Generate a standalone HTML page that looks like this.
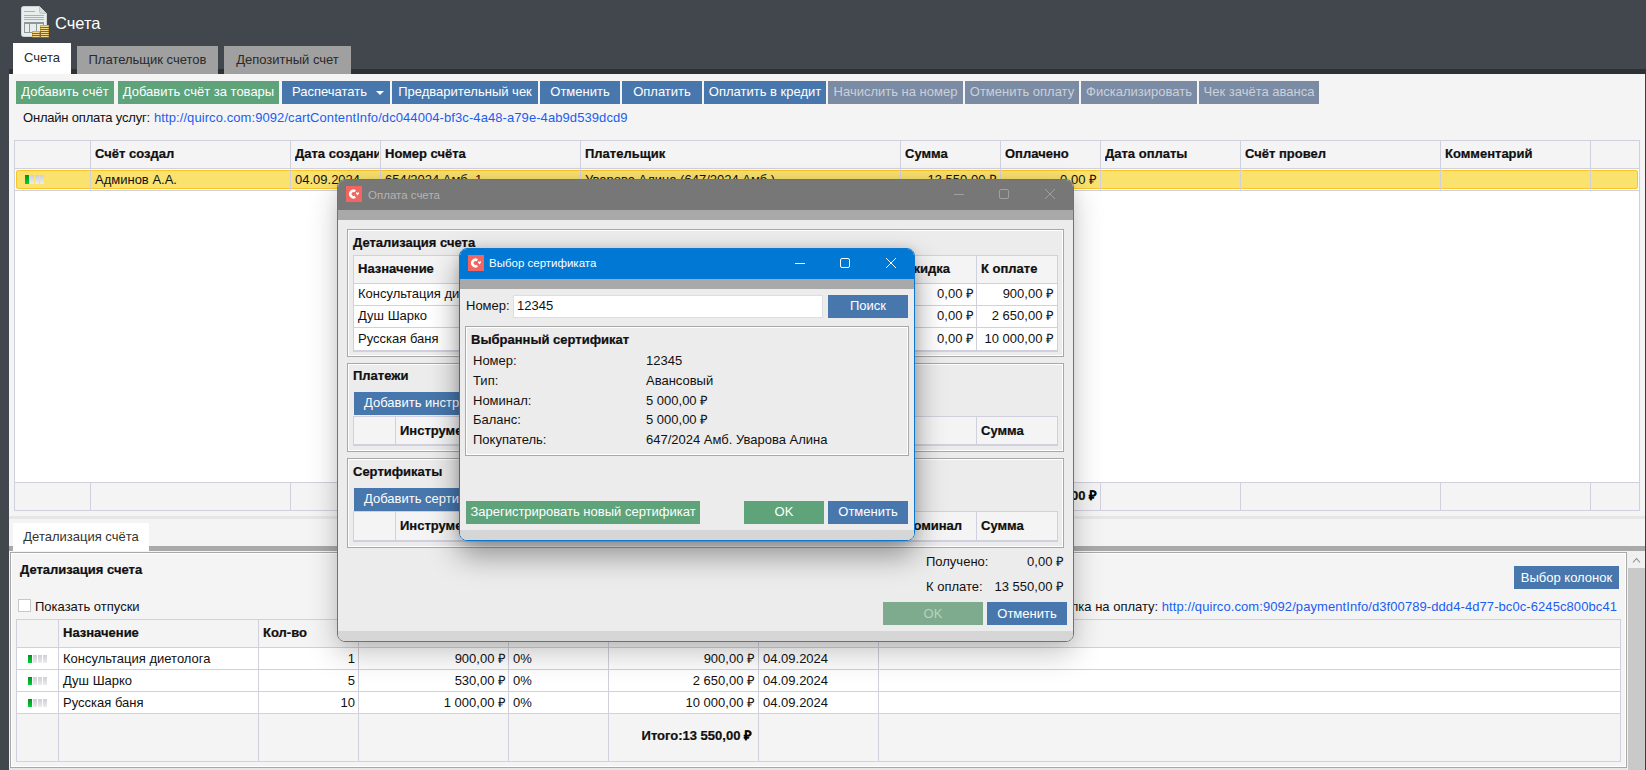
<!DOCTYPE html>
<html><head><meta charset="utf-8">
<style>
*{box-sizing:border-box;margin:0;padding:0}
html,body{width:1646px;height:770px;overflow:hidden}
body{background:#42474e;font-family:"Liberation Sans",sans-serif;font-size:13px;color:#111;position:relative}
.a{position:absolute}
.t{position:absolute;white-space:nowrap;line-height:16px}
.b{font-weight:bold;-webkit-text-stroke:0.2px #000}
.btn{position:absolute;height:23px;line-height:21px;color:#fff;text-align:center;white-space:nowrap;font-size:13px}
.g{background:#5ea37a}
.bl{background:#4877ad}
.dis{background:#7a8ba3;color:#c9d1dc}
.lnk{color:#1b5ef0;letter-spacing:0.08px}
.tab{position:absolute;text-align:center;line-height:28px;color:#2a2a2a}
.vl{position:absolute;width:1px;background:#d0d0de}
.hl{position:absolute;height:1px;background:#d0d0de}
.r{text-align:right}
.pb{position:absolute;width:4px;height:9px}
.pg{background:linear-gradient(#0b8a22,#00d034)}
.pgr{background:linear-gradient(#cfcfd4,#ececee)}
</style></head><body>

<!-- title -->
<svg class="a" style="left:21px;top:6px" width="29" height="33" viewBox="0 0 29 33">
  <path d="M0.5 2.5 Q0.5 0.5 2.5 0.5 L18.5 0.5 L25.5 7.5 L25.5 28.5 Q25.5 30.5 23.5 30.5 L2.5 30.5 Q0.5 30.5 0.5 28.5 Z" fill="#e8eded" stroke="#cdd3d3" stroke-width="1"/>
  <path d="M18.5 0.5 L18.5 5.5 Q18.5 7.5 20.5 7.5 L25.5 7.5" fill="#d3dada" stroke="#bcc5c5"/>
  <g fill="#a9b1b1"><rect x="3" y="5" width="11" height="1"/><rect x="3" y="9" width="20" height="1"/><rect x="3" y="11" width="20" height="1"/><rect x="3" y="13" width="20" height="1"/></g>
  <rect x="3.5" y="16.5" width="19" height="10" fill="none" stroke="#8f9898" stroke-width="1"/>
  <path d="M3.5 17.5h19M8.5 16.5v10M15.5 16.5v10" stroke="#8f9898" stroke-width="1"/>
  <g fill="#d4aa50"><rect x="19" y="19" width="9" height="13"/><rect x="11" y="25" width="8" height="7"/></g>
  <g fill="#8a6420"><rect x="19" y="21" width="9" height="1"/><rect x="19" y="23" width="9" height="1"/><rect x="19" y="25" width="9" height="1"/><rect x="19" y="27" width="9" height="1"/><rect x="19" y="29" width="9" height="1"/><rect x="19" y="31" width="9" height="1"/><rect x="11" y="27" width="8" height="1"/><rect x="11" y="29" width="8" height="1"/><rect x="11" y="31" width="8" height="1"/><rect x="19" y="25" width="1" height="7"/></g>
  <g fill="#f0d890"><rect x="20" y="20" width="7" height="1"/><rect x="20" y="22" width="7" height="1"/><rect x="20" y="24" width="7" height="1"/><rect x="20" y="26" width="7" height="1"/><rect x="20" y="28" width="7" height="1"/><rect x="20" y="30" width="7" height="1"/><rect x="12" y="26" width="6" height="1"/><rect x="12" y="28" width="6" height="1"/><rect x="12" y="30" width="6" height="1"/></g>
</svg>
<div class="t" style="left:55px;top:13px;font-size:16.5px;line-height:20px;color:#fff">Счета</div>

<!-- dark band + tabs -->
<div class="a" style="left:9px;top:69px;width:1637px;height:5px;background:#2d3134"></div>
<div class="tab" style="left:13px;top:43px;width:58px;height:31px;background:#fff;line-height:29px">Счета</div>
<div class="tab" style="left:77px;top:46px;width:141px;height:28px;background:#a0a0a0">Плательщик счетов</div>
<div class="tab" style="left:224px;top:46px;width:127px;height:28px;background:#a0a0a0">Депозитный счет</div>

<!-- content panel -->
<div class="a" style="left:9px;top:74px;width:1636px;height:696px;background:#f4f4f4"></div>
<div class="a" style="left:1645px;top:74px;width:1px;height:696px;background:#3a3e44"></div>

<!-- toolbar -->
<div class="btn g" style="left:16px;top:81px;width:98px">Добавить счёт</div>
<div class="btn g" style="left:118px;top:81px;width:161px">Добавить счёт за товары</div>
<div class="btn bl" style="left:282px;top:81px;width:108px;text-align:left;padding-left:10px">Распечатать<svg class="a" style="left:94px;top:10px" width="8" height="4"><path d="M0 0h8L4 4z" fill="#fff"/></svg></div>
<div class="btn bl" style="left:392px;top:81px;width:146px">Предварительный чек</div>
<div class="btn bl" style="left:540px;top:81px;width:80px">Отменить</div>
<div class="btn bl" style="left:622px;top:81px;width:80px">Оплатить</div>
<div class="btn bl" style="left:704px;top:81px;width:122px">Оплатить в кредит</div>
<div class="btn dis" style="left:828px;top:81px;width:135px">Начислить на номер</div>
<div class="btn dis" style="left:965px;top:81px;width:114px">Отменить оплату</div>
<div class="btn dis" style="left:1081px;top:81px;width:116px">Фискализировать</div>
<div class="btn dis" style="left:1199px;top:81px;width:120px">Чек зачёта аванса</div>

<div class="t" style="left:23px;top:110px;letter-spacing:-0.2px">Онлайн оплата услуг:</div><div class="t lnk" style="left:154px;top:110px">http://quirco.com:9092/cartContentInfo/dc044004-bf3c-4a48-a79e-4ab9d539dcd9</div>

<!-- MAINTABLE -->
<div class="a" style="left:14px;top:140px;width:1626px;height:28px;background:#f4f4f4"></div>
<div class="a" style="left:14px;top:168px;width:1626px;height:314px;background:#fff"></div>
<div class="a" style="left:14px;top:482px;width:1626px;height:28px;background:#f4f4f4"></div>
<div class="a" style="left:16px;top:170px;width:1622px;height:19px;background:#f9e26e;border:1px solid #fcc427;border-radius:2px"></div>
<div class="hl" style="left:14px;top:140px;width:1626px"></div>
<div class="hl" style="left:14px;top:168px;width:1626px"></div>
<div class="hl" style="left:14px;top:190px;width:1626px"></div>
<div class="hl" style="left:14px;top:482px;width:1626px"></div>
<div class="hl" style="left:14px;top:510px;width:1626px"></div>
<div class="vl" style="left:14px;top:140px;height:371px"></div>
<div class="vl" style="left:90px;top:140px;height:51px"></div>
<div class="vl" style="left:90px;top:482px;height:29px"></div>
<div class="vl" style="left:290px;top:140px;height:51px"></div>
<div class="vl" style="left:290px;top:482px;height:29px"></div>
<div class="vl" style="left:380px;top:140px;height:51px"></div>
<div class="vl" style="left:380px;top:482px;height:29px"></div>
<div class="vl" style="left:580px;top:140px;height:51px"></div>
<div class="vl" style="left:580px;top:482px;height:29px"></div>
<div class="vl" style="left:900px;top:140px;height:51px"></div>
<div class="vl" style="left:900px;top:482px;height:29px"></div>
<div class="vl" style="left:1000px;top:140px;height:51px"></div>
<div class="vl" style="left:1000px;top:482px;height:29px"></div>
<div class="vl" style="left:1100px;top:140px;height:51px"></div>
<div class="vl" style="left:1100px;top:482px;height:29px"></div>
<div class="vl" style="left:1240px;top:140px;height:51px"></div>
<div class="vl" style="left:1240px;top:482px;height:29px"></div>
<div class="vl" style="left:1440px;top:140px;height:51px"></div>
<div class="vl" style="left:1440px;top:482px;height:29px"></div>
<div class="vl" style="left:1590px;top:140px;height:51px"></div>
<div class="vl" style="left:1590px;top:482px;height:29px"></div>
<div class="vl" style="left:1639px;top:140px;height:371px"></div>
<div class="t b" style="left:95px;top:146px;width:194px;overflow:hidden">Счёт создал</div>
<div class="t b" style="left:295px;top:146px;width:84px;overflow:hidden">Дата создания</div>
<div class="t b" style="left:385px;top:146px;width:194px;overflow:hidden">Номер счёта</div>
<div class="t b" style="left:585px;top:146px;width:314px;overflow:hidden">Плательщик</div>
<div class="t b" style="left:905px;top:146px;width:94px;overflow:hidden">Сумма</div>
<div class="t b" style="left:1005px;top:146px;width:94px;overflow:hidden">Оплачено</div>
<div class="t b" style="left:1105px;top:146px;width:134px;overflow:hidden">Дата оплаты</div>
<div class="t b" style="left:1245px;top:146px;width:194px;overflow:hidden">Счёт провел</div>
<div class="t b" style="left:1445px;top:146px;width:144px;overflow:hidden">Комментарий</div>
<div class="pb pg" style="left:25px;top:175px"></div>
<div class="pb pgr" style="left:30px;top:175px"></div>
<div class="pb pgr" style="left:35px;top:175px"></div>
<div class="pb pgr" style="left:40px;top:175px"></div>
<div class="t" style="left:95px;top:172px">Админов А.А.</div>
<div class="t" style="left:295px;top:172px">04.09.2024</div>
<div class="t" style="left:385px;top:172px">654/2024 Амб. 1</div>
<div class="t" style="left:585px;top:172px">Уварова Алина (647/2024 Амб.)</div>
<div class="t r" style="left:900px;top:172px;width:97px">13 550,00 ₽</div>
<div class="t r" style="left:1000px;top:172px;width:97px">0,00 ₽</div>
<div class="t b r" style="left:900px;top:488px;width:97px">13 550,00 ₽</div>
<div class="t b r" style="left:1000px;top:488px;width:97px">0,00 ₽</div>
<!-- /MAINTABLE -->

<!-- BOTTOM -->
<div class="a" style="left:9px;top:516px;width:1636px;height:3px;background:#e6e6e6"></div>
<div class="a" style="left:9px;top:546px;width:1636px;height:5px;background:#a9a9a9"></div>
<div class="tab" style="left:13px;top:523px;width:136px;height:28px;background:#fff;line-height:28px;color:#333">Детализация счёта</div>
<div class="a" style="left:9px;top:768px;width:1618px;height:2px;background:#e6e6e6"></div>
<div class="a" style="left:10px;top:552px;width:1617px;height:216px;background:#f4f4f4;border:1px solid #a8a8a8;box-shadow:inset 1px 1px 0 #fff,inset -1px -1px 0 #fff"></div>
<div class="a" style="left:1627px;top:551px;width:18px;height:219px;background:#f0f0f0"></div>
<div class="a" style="left:1628px;top:568px;width:17px;height:202px;background:#c9c9c9"></div>
<svg class="a" style="left:1632px;top:556px" width="10" height="8"><path d="M1 6.5L4.5 2.5L8 6.5" fill="none" stroke="#8a8a8a" stroke-width="1.1"/></svg>
<div class="t b" style="left:20px;top:562px">Детализация счета</div>
<div class="btn bl" style="left:1514px;top:566px;width:105px;line-height:23px">Выбор колонок</div>
<div class="a" style="left:18px;top:599px;width:13px;height:13px;background:#fff;border:1px solid #c8c8c8"></div>
<div class="t" style="left:35px;top:599px">Показать отпуски</div>
<div class="t r" style="left:1000px;top:599px;width:617px">Ссылка на оплату: <span class="lnk">http://quirco.com:9092/paymentInfo/d3f00789-ddd4-4d77-bc0c-6245c800bc41</span></div>
<div class="a" style="left:16px;top:619px;width:1605px;height:28px;background:#f4f4f4"></div>
<div class="a" style="left:16px;top:647px;width:1605px;height:66px;background:#fff"></div>
<div class="a" style="left:16px;top:713px;width:1605px;height:48px;background:#f4f4f4"></div>
<div class="hl" style="left:16px;top:619px;width:1605px"></div>
<div class="hl" style="left:16px;top:647px;width:1605px"></div>
<div class="hl" style="left:16px;top:669px;width:1605px"></div>
<div class="hl" style="left:16px;top:691px;width:1605px"></div>
<div class="hl" style="left:16px;top:713px;width:1605px"></div>
<div class="hl" style="left:16px;top:761px;width:1605px"></div>
<div class="vl" style="left:16px;top:619px;height:143px"></div>
<div class="vl" style="left:58px;top:619px;height:143px"></div>
<div class="vl" style="left:258px;top:619px;height:143px"></div>
<div class="vl" style="left:358px;top:619px;height:143px"></div>
<div class="vl" style="left:508px;top:619px;height:143px"></div>
<div class="vl" style="left:608px;top:619px;height:143px"></div>
<div class="vl" style="left:758px;top:619px;height:143px"></div>
<div class="vl" style="left:878px;top:619px;height:143px"></div>
<div class="vl" style="left:1620px;top:619px;height:143px"></div>
<div class="t b" style="left:63px;top:625px">Назначение</div>
<div class="t b" style="left:263px;top:625px">Кол-во</div>
<div class="t b" style="left:363px;top:625px">Цена</div>
<div class="t b" style="left:513px;top:625px">Скидка</div>
<div class="t b" style="left:613px;top:625px">Сумма</div>
<div class="t b" style="left:763px;top:625px">Дата</div>
<div class="pb pg" style="left:28px;top:655px;height:8px"></div>
<div class="pb pgr" style="left:33px;top:655px;height:8px"></div>
<div class="pb pgr" style="left:38px;top:655px;height:8px"></div>
<div class="pb pgr" style="left:43px;top:655px;height:8px"></div>
<div class="t" style="left:63px;top:651px">Консультация диетолога</div>
<div class="t r" style="left:258px;top:651px;width:97px">1</div>
<div class="t r" style="left:358px;top:651px;width:148px">900,00 ₽</div>
<div class="t" style="left:513px;top:651px">0%</div>
<div class="t r" style="left:608px;top:651px;width:147px">900,00 ₽</div>
<div class="t" style="left:763px;top:651px">04.09.2024</div>
<div class="pb pg" style="left:28px;top:677px;height:8px"></div>
<div class="pb pgr" style="left:33px;top:677px;height:8px"></div>
<div class="pb pgr" style="left:38px;top:677px;height:8px"></div>
<div class="pb pgr" style="left:43px;top:677px;height:8px"></div>
<div class="t" style="left:63px;top:673px">Душ Шарко</div>
<div class="t r" style="left:258px;top:673px;width:97px">5</div>
<div class="t r" style="left:358px;top:673px;width:148px">530,00 ₽</div>
<div class="t" style="left:513px;top:673px">0%</div>
<div class="t r" style="left:608px;top:673px;width:147px">2 650,00 ₽</div>
<div class="t" style="left:763px;top:673px">04.09.2024</div>
<div class="pb pg" style="left:28px;top:699px;height:8px"></div>
<div class="pb pgr" style="left:33px;top:699px;height:8px"></div>
<div class="pb pgr" style="left:38px;top:699px;height:8px"></div>
<div class="pb pgr" style="left:43px;top:699px;height:8px"></div>
<div class="t" style="left:63px;top:695px">Русская баня</div>
<div class="t r" style="left:258px;top:695px;width:97px">10</div>
<div class="t r" style="left:358px;top:695px;width:148px">1 000,00 ₽</div>
<div class="t" style="left:513px;top:695px">0%</div>
<div class="t r" style="left:608px;top:695px;width:147px">10 000,00 ₽</div>
<div class="t" style="left:763px;top:695px">04.09.2024</div>
<div class="t b r" style="left:608px;top:728px;width:144px">Итого:13 550,00 ₽</div>
<!-- /BOTTOM -->

<!-- MODAL1 -->
<div class="a" style="left:337px;top:179px;width:737px;height:463px;border-radius:8px;box-shadow:0 12px 30px rgba(0,0,0,0.22),0 0 14px rgba(0,0,0,0.06);"></div>
<div class="a" style="left:337px;top:179px;width:737px;height:463px;border-radius:8px;overflow:hidden;background:#ececec;border:1px solid #727272"><div class="a" style="left:1px;top:1px;width:736px;height:462px">
<div class="a" style="left:-1px;top:-2px;width:736px;height:31px;background:#777777"></div>
<div class="a" style="left:-1px;top:29px;width:736px;height:10px;background:#a9a9a9"></div>
<div class="a" style="left:-1px;top:450px;width:736px;height:11px;background:#d6d6d6"></div>
<svg class="a" style="left:7px;top:5px" width="16" height="16" viewBox="0 0 16 16"><rect width="16" height="16" fill="#f26560"/><path d="M9.3 5.2A3.3 3.3 0 1 0 9.3 10.8" fill="none" stroke="#fff" stroke-width="2.5"/><path d="M10 6.6Q10.7 6 11.5 6.9Q12.3 6 13 6.6L13 7.6L11.5 9.6L10 7.6Z" fill="#fff"/></svg>
<div class="t" style="left:29px;top:6px;color:#b4b4b4;font-size:11.5px">Оплата счета</div>
<div class="a" style="left:615px;top:13px;width:10px;height:1px;background:#a0a0a0"></div>
<div class="a" style="left:660px;top:8px;width:10px;height:10px;border:1px solid #a0a0a0;border-radius:2px"></div>
<svg class="a" style="left:706px;top:8px" width="10" height="10"><path d="M0 0L10 10M10 0L0 10" stroke="#a0a0a0" stroke-width="1"/></svg>
<div class="a" style="left:8px;top:48px;width:717px;height:128px;border:1px solid #a8a8a8;box-shadow:inset 1px 1px 0 #fff,inset -1px -1px 0 #fff"></div>
<div class="t b" style="left:14px;top:54px;">Детализация счета</div>
<div class="a" style="left:8px;top:182px;width:717px;height:89px;border:1px solid #a8a8a8;box-shadow:inset 1px 1px 0 #fff,inset -1px -1px 0 #fff"></div>
<div class="t b" style="left:14px;top:187px;">Платежи</div>
<div class="a" style="left:8px;top:277px;width:717px;height:90px;border:1px solid #a8a8a8;box-shadow:inset 1px 1px 0 #fff,inset -1px -1px 0 #fff"></div>
<div class="t b" style="left:14px;top:283px;">Сертификаты</div>
<div class="a" style="left:14px;top:74px;width:705px;height:28px;background:#f4f4f4"></div>
<div class="a" style="left:14px;top:102px;width:705px;height:67px;background:#fff"></div>
<div class="a" style="left:14px;top:74px;width:705px;height:1px;background:#d0d0de"></div>
<div class="a" style="left:14px;top:102px;width:705px;height:1px;background:#d0d0de"></div>
<div class="a" style="left:14px;top:124px;width:705px;height:1px;background:#d0d0de"></div>
<div class="a" style="left:14px;top:146px;width:705px;height:1px;background:#d0d0de"></div>
<div class="a" style="left:14px;top:169px;width:705px;height:1px;background:#d0d0de"></div>
<div class="a" style="left:14px;top:74px;width:1px;height:96px;background:#d0d0de"></div>
<div class="a" style="left:560px;top:74px;width:1px;height:96px;background:#d0d0de"></div>
<div class="a" style="left:637px;top:74px;width:1px;height:96px;background:#d0d0de"></div>
<div class="a" style="left:718px;top:74px;width:1px;height:96px;background:#d0d0de"></div>
<div class="a" style="left:14px;top:169px;width:705px;height:2px;background:#d0d0de"></div>
<div class="t b" style="left:19px;top:80px;">Назначение</div>
<div class="t b" style="left:565px;top:80px;">Скидка</div>
<div class="t b" style="left:642px;top:80px;">К оплате</div>
<div class="t" style="left:19px;top:105px;">Консультация диетолога</div>
<div class="t r" style="left:560px;top:105px;width:75px">0,00 ₽</div>
<div class="t r" style="left:637px;top:105px;width:78px">900,00 ₽</div>
<div class="t" style="left:19px;top:127px;">Душ Шарко</div>
<div class="t r" style="left:560px;top:127px;width:75px">0,00 ₽</div>
<div class="t r" style="left:637px;top:127px;width:78px">2 650,00 ₽</div>
<div class="t" style="left:19px;top:150px;">Русская баня</div>
<div class="t r" style="left:560px;top:150px;width:75px">0,00 ₽</div>
<div class="t r" style="left:637px;top:150px;width:78px">10 000,00 ₽</div>
<div class="a" style="left:15px;top:211px;width:160px;height:23px;background:#4877ad"></div>
<div class="t" style="left:25px;top:214px;color:#fff">Добавить инструмент</div>
<div class="a" style="left:14px;top:235px;width:705px;height:28px;background:#f4f4f4"></div>
<div class="a" style="left:14px;top:263px;width:705px;height:0px;background:#fff"></div>
<div class="a" style="left:14px;top:235px;width:705px;height:1px;background:#d0d0de"></div>
<div class="a" style="left:14px;top:263px;width:705px;height:1px;background:#d0d0de"></div>
<div class="a" style="left:14px;top:235px;width:1px;height:29px;background:#d0d0de"></div>
<div class="a" style="left:56px;top:235px;width:1px;height:29px;background:#d0d0de"></div>
<div class="a" style="left:637px;top:235px;width:1px;height:29px;background:#d0d0de"></div>
<div class="a" style="left:718px;top:235px;width:1px;height:29px;background:#d0d0de"></div>
<div class="a" style="left:14px;top:263px;width:705px;height:2px;background:#d0d0de"></div>
<div class="a" style="left:15px;top:236px;width:703px;height:27px;background:#f4f4f4"></div>
<div class="a" style="left:56px;top:235px;width:1px;height:29px;background:#d0d0de"></div>
<div class="a" style="left:637px;top:235px;width:1px;height:29px;background:#d0d0de"></div>
<div class="t b" style="left:61px;top:242px;">Инструмент</div>
<div class="t b" style="left:642px;top:242px;">Сумма</div>
<div class="a" style="left:15px;top:307px;width:160px;height:23px;background:#4877ad"></div>
<div class="t" style="left:25px;top:310px;color:#fff">Добавить сертификат</div>
<div class="a" style="left:14px;top:330px;width:705px;height:29px;background:#f4f4f4"></div>
<div class="a" style="left:14px;top:359px;width:705px;height:0px;background:#fff"></div>
<div class="a" style="left:14px;top:330px;width:705px;height:1px;background:#d0d0de"></div>
<div class="a" style="left:14px;top:359px;width:705px;height:1px;background:#d0d0de"></div>
<div class="a" style="left:14px;top:330px;width:1px;height:30px;background:#d0d0de"></div>
<div class="a" style="left:56px;top:330px;width:1px;height:30px;background:#d0d0de"></div>
<div class="a" style="left:560px;top:330px;width:1px;height:30px;background:#d0d0de"></div>
<div class="a" style="left:637px;top:330px;width:1px;height:30px;background:#d0d0de"></div>
<div class="a" style="left:718px;top:330px;width:1px;height:30px;background:#d0d0de"></div>
<div class="a" style="left:14px;top:359px;width:705px;height:2px;background:#d0d0de"></div>
<div class="a" style="left:15px;top:331px;width:703px;height:28px;background:#f4f4f4"></div>
<div class="a" style="left:56px;top:330px;width:1px;height:30px;background:#d0d0de"></div>
<div class="a" style="left:560px;top:330px;width:1px;height:30px;background:#d0d0de"></div>
<div class="a" style="left:637px;top:330px;width:1px;height:30px;background:#d0d0de"></div>
<div class="t b" style="left:61px;top:337px;">Инструмент</div>
<div class="t b" style="left:565px;top:337px;">Номинал</div>
<div class="t b" style="left:642px;top:337px;">Сумма</div>
<div class="t" style="left:587px;top:373px;">Получено:</div>
<div class="t r" style="left:661px;top:373px;width:64px">0,00 ₽</div>
<div class="t" style="left:587px;top:398px;">К оплате:</div>
<div class="t r" style="left:651px;top:398px;width:74px">13 550,00 ₽</div>
<div class="btn" style="left:544px;top:421px;width:100px;height:23px;line-height:23px;background:#7eab8e;color:#b9d2c1">OK</div>
<div class="btn bl" style="left:648px;top:421px;width:80px;height:23px;line-height:23px">Отменить</div>
</div></div>
<!-- /MODAL1 -->

<!-- MODAL2 -->
<div class="a" style="left:459px;top:248px;width:456px;height:293px;border-radius:8px;box-shadow:0 14px 30px rgba(0,0,0,0.40),0 0 10px rgba(0,0,0,0.12);"></div>
<div class="a" style="left:459px;top:248px;width:456px;height:293px;border-radius:8px;overflow:hidden;background:#ececec;border:1px solid #0a78d0">
<div class="a" style="left:-1px;top:-1px;width:456px;height:31px;background:#0078d4"></div>
<div class="a" style="left:-1px;top:30px;width:456px;height:10px;background:#a9a9a9"></div>
<div class="a" style="left:-1px;top:281px;width:456px;height:11px;background:#d6d6d6"></div>
<svg class="a" style="left:8px;top:6px" width="16" height="16" viewBox="0 0 16 16"><rect width="16" height="16" fill="#f26560"/><path d="M9.3 5.2A3.3 3.3 0 1 0 9.3 10.8" fill="none" stroke="#fff" stroke-width="2.5"/><path d="M10 6.6Q10.7 6 11.5 6.9Q12.3 6 13 6.6L13 7.6L11.5 9.6L10 7.6Z" fill="#fff"/></svg>
<div class="t" style="left:29px;top:6px;color:#fff;font-size:11.5px">Выбор сертификата</div>
<div class="a" style="left:335px;top:14px;width:10px;height:1px;background:#fff"></div>
<div class="a" style="left:380px;top:9px;width:10px;height:10px;border:1px solid #fff;border-radius:2px"></div>
<svg class="a" style="left:426px;top:9px" width="10" height="10"><path d="M0 0L10 10M10 0L0 10" stroke="#fff" stroke-width="1"/></svg>
<div class="t" style="left:6px;top:49px;">Номер:</div>
<div class="a" style="left:53px;top:46px;width:310px;height:23px;background:#fff;border:1px solid #dedede"></div>
<div class="t" style="left:57px;top:49px;">12345</div>
<div class="btn bl" style="left:368px;top:46px;width:80px">Поиск</div>
<div class="a" style="left:5px;top:77px;width:444px;height:130px;border:1px solid #a8a8a8;box-shadow:inset 1px 1px 0 #fff,inset -1px -1px 0 #fff"></div>
<div class="t b" style="left:11px;top:83px;">Выбранный сертификат</div>
<div class="t" style="left:13px;top:104px;">Номер:</div>
<div class="t" style="left:186px;top:104px;">12345</div>
<div class="t" style="left:13px;top:124px;">Тип:</div>
<div class="t" style="left:186px;top:124px;">Авансовый</div>
<div class="t" style="left:13px;top:144px;">Номинал:</div>
<div class="t" style="left:186px;top:144px;">5 000,00 ₽</div>
<div class="t" style="left:13px;top:163px;">Баланс:</div>
<div class="t" style="left:186px;top:163px;">5 000,00 ₽</div>
<div class="t" style="left:13px;top:183px;">Покупатель:</div>
<div class="t" style="left:186px;top:183px;">647/2024 Амб. Уварова Алина</div>
<div class="btn g" style="left:6px;top:252px;width:234px">Зарегистрировать новый сертификат</div>
<div class="btn g" style="left:284px;top:252px;width:80px">OK</div>
<div class="btn bl" style="left:368px;top:252px;width:80px">Отменить</div>
</div>
<!-- /MODAL2 -->

</body></html>
